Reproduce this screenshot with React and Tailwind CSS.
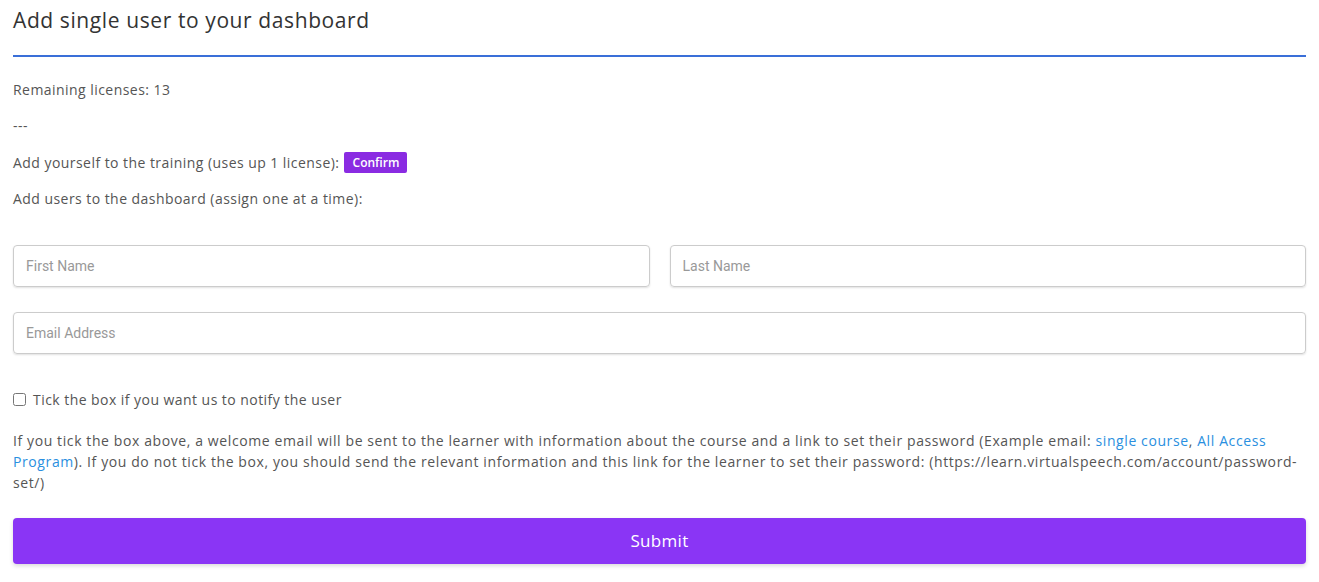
export default function App() {
  return (
    <div className="min-h-screen bg-white px-[13px] text-[14px] tracking-[0.45px] text-[#555]" style={{ fontFamily: '"Open Sans", sans-serif' }}>
      <h1 className="pt-[7px] text-[21px] leading-[26px] tracking-[0.6px] text-[#333]">Add single user to your dashboard</h1>
      <div className="mt-[22px] h-[2px] bg-[#3a6fd8]" />

      <p className="mt-[22px] leading-[21px]">Remaining licenses: 13</p>
      <p className="mt-[15px] leading-[21px]">---</p>
      <div className="mt-[16px] flex h-[21px] items-center gap-[5px] leading-[21px]">
        <span>Add yourself to the training (uses up 1 license):</span>
        <button className="h-[21px] w-[63px] rounded-[2px] bg-[#8a2be2] text-[12px] font-semibold leading-[21px] tracking-normal text-white">Confirm</button>
      </div>
      <p className="mt-[15px] leading-[21px]">Add users to the dashboard (assign one at a time):</p>

      <form className="mt-[36px]">
        <div className="flex gap-[20px]">
          <input
            placeholder="First Name"
            className="h-[42px] flex-1 rounded-[4px] border border-[#ccc] px-[12px] text-[14px] tracking-normal shadow-[0_1px_2px_rgba(0,0,0,0.12)] placeholder:text-[#999] outline-none"
            style={{ fontFamily: 'Roboto, sans-serif' }}
          />
          <input
            placeholder="Last Name"
            className="h-[42px] flex-1 rounded-[4px] border border-[#ccc] px-[12px] text-[14px] tracking-normal shadow-[0_1px_2px_rgba(0,0,0,0.12)] placeholder:text-[#999] outline-none"
            style={{ fontFamily: 'Roboto, sans-serif' }}
          />
        </div>
        <input
          placeholder="Email Address"
          className="mt-[25px] block h-[42px] w-full rounded-[4px] border border-[#ccc] px-[12px] text-[14px] tracking-normal shadow-[0_1px_2px_rgba(0,0,0,0.12)] placeholder:text-[#999] outline-none"
          style={{ fontFamily: 'Roboto, sans-serif' }}
        />

        <label className="mt-[35px] flex items-center gap-[7px] leading-[21px]">
          <input type="checkbox" className="m-0 h-[13px] w-[13px]" />
          <span>Tick the box if you want us to notify the user</span>
        </label>

        <p className="mt-[20px] leading-[21px] tracking-[0.6px]">
          If you tick the box above, a welcome email will be sent to the learner with information about the course and a link to set their password (Example email:{' '}
          <a href="#" className="text-[#2a8fe0]">single course</a>,{' '}
          <a href="#" className="text-[#2a8fe0]">All Access Program</a>). If you do not tick the box, you should send the relevant information and this link for the learner to set their password: (https://learn.virtualspeech.com/account/password-set/)
        </p>

        <button
          type="button"
          className="mt-[25px] h-[46px] w-full rounded-[4px] bg-[#8a35f5] text-[17px] font-medium tracking-[0.3px] text-white shadow-[0_2px_4px_rgba(0,0,0,0.15)]"
        >
          Submit
        </button>
      </form>
    </div>
  );
}
